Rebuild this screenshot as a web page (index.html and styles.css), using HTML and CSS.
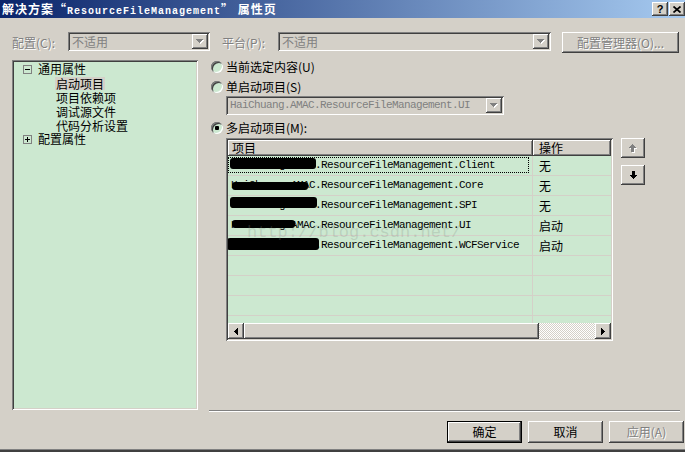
FILE: index.html
```html
<!DOCTYPE html>
<html lang="zh-CN">
<head>
  <meta charset="UTF-8" />
  <title>解决方案属性页</title>
  <link rel="stylesheet" href="styles.css">
</head>
<body>
  <div class="window">
    <div class="titlebar">
      <span class="title">解决方案“<span class="title-mono">ResourceFileManagement</span>” 属性页</span>
      <div class="caption">
        <span class="cap-btn raised help">?</span>
        <span class="cap-btn raised">
          <svg width="8" height="7" viewBox="0 0 8 7"><path d="M0.5 0.5l7 6M7.5 0.5l-7 6" stroke="#000" stroke-width="1.7"/></svg>
        </span>
      </div>
    </div>

    <div class="toolbar">
      <span class="label disabled">配置(C):</span>
      <div class="combo sunken combo-config">
        <span class="value">不适用</span>
        <span class="drop raised">
          <svg width="8" height="5" viewBox="0 0 8 5" shape-rendering="crispEdges"><path d="M1 1h7v1h-1v1h-1v1h-1v1h-1v-1h-1v-1h-1v-1h-1z" fill="#fff"/><path d="M0 0h7v1h-1v1h-1v1h-1v1h-1v-1h-1v-1h-1v-1h-1z" fill="#808080"/></svg>
        </span>
      </div>
      <span class="label disabled label-platform">平台(P):</span>
      <div class="combo sunken combo-platform">
        <span class="value">不适用</span>
        <span class="drop raised">
          <svg width="8" height="5" viewBox="0 0 8 5" shape-rendering="crispEdges"><path d="M1 1h7v1h-1v1h-1v1h-1v1h-1v-1h-1v-1h-1v-1h-1z" fill="#fff"/><path d="M0 0h7v1h-1v1h-1v1h-1v1h-1v-1h-1v-1h-1v-1h-1z" fill="#808080"/></svg>
        </span>
      </div>
      <div class="btn raised btn-manager disabled">配置管理器(O)...</div>
    </div>

    <div class="main">
      <div class="tree sunken">
        <div class="node"><span class="expander minus"></span>通用属性</div>
        <div class="node child"><span class="sel">启动项目</span></div>
        <div class="node child"><span class="item">项目依赖项</span></div>
        <div class="node child"><span class="item">调试源文件</span></div>
        <div class="node child"><span class="item">代码分析设置</span></div>
        <div class="node"><span class="expander plus"></span>配置属性</div>
      </div>

      <div class="panel">
        <div class="radio-row"><span class="radio"></span>当前选定内容(U)</div>
        <div class="radio-row second"><span class="radio"></span>单启动项目(S)</div>
        <div class="combo sunken combo-single">
          <span class="value mono">HaiChuang.AMAC.ResourceFileManagement.UI</span>
          <span class="drop raised">
            <svg width="8" height="5" viewBox="0 0 8 5" shape-rendering="crispEdges"><path d="M1 1h7v1h-1v1h-1v1h-1v1h-1v-1h-1v-1h-1v-1h-1z" fill="#fff"/><path d="M0 0h7v1h-1v1h-1v1h-1v1h-1v-1h-1v-1h-1v-1h-1z" fill="#808080"/></svg>
          </span>
        </div>
        <div class="radio-row third"><span class="radio checked"></span>多启动项目(M):</div>

        <div class="multi">
          <div class="list sunken">
            <div class="list-head">
              <div class="head-cell raised head-name">项目</div>
              <div class="head-cell raised head-action">操作</div>
            </div>
            <div class="list-body">
              <div class="row">
                <div class="cell-name mono focus">HaiChuang.AMAC.ResourceFileManagement.Client<span class="blot blot-1"></span></div>
                <div class="cell-action">无</div>
              </div>
              <div class="row">
                <div class="cell-name mono">HaiChuang.AMAC.ResourceFileManagement.Core<span class="blot blot-2"></span></div>
                <div class="cell-action">无</div>
              </div>
              <div class="row">
                <div class="cell-name mono">HaiChuang.AMAC.ResourceFileManagement.SPI<span class="blot blot-3"></span></div>
                <div class="cell-action">无</div>
              </div>
              <div class="row">
                <div class="cell-name mono">HaiChuang.AMAC.ResourceFileManagement.UI<span class="blot blot-4"></span></div>
                <div class="cell-action">启动</div>
              </div>
              <div class="row">
                <div class="cell-name mono">HaiChuang.AMAC.ResourceFileManagement.WCFService<span class="blot blot-5"></span></div>
                <div class="cell-action">启动</div>
              </div>
              <div class="row"><div class="cell-name"></div><div class="cell-action"></div></div>
              <div class="row"><div class="cell-name"></div><div class="cell-action"></div></div>
              <div class="row"><div class="cell-name"></div><div class="cell-action"></div></div>
              <div class="row"><div class="cell-name"></div><div class="cell-action"></div></div>
              <div class="watermark">http://blog.csdn.net/</div>
            </div>
            <div class="hscroll">
              <span class="sb-btn raised">
                <svg width="4" height="7" viewBox="0 0 4 7" shape-rendering="crispEdges"><path d="M3 0h1v7h-1v-1h-1v-1h-1v-1h-1v-1h1v-1h1v-1h1z"/></svg>
              </span>
              <span class="sb-thumb raised"></span>
              <span class="sb-track"></span>
              <span class="sb-btn raised">
                <svg width="4" height="7" viewBox="0 0 4 7" shape-rendering="crispEdges"><path d="M0 0h1v1h1v1h1v1h1v1h-1v1h-1v1h-1v1h-1z"/></svg>
              </span>
            </div>
          </div>
          <div class="order-btns">
            <span class="order-btn raised">
              <svg width="8" height="9" viewBox="0 0 8 9" shape-rendering="crispEdges"><path d="M4 1h1v1h1v1h1v1h1v1h-2v4h-3v-4h-2v-1h1v-1h1v-1h1z" fill="#fff"/><path d="M3 0h1v1h1v1h1v1h1v1h-2v4h-3v-4h-2v-1h1v-1h1v-1h1z" fill="#808080"/></svg>
            </span>
            <span class="order-btn raised">
              <svg width="7" height="8" viewBox="0 0 7 8" shape-rendering="crispEdges"><path d="M2 0h3v4h2v1h-1v1h-1v1h-1v1h-1v-1h-1v-1h-1v-1h-1v-1h2z"/></svg>
            </span>
          </div>
        </div>

        <div class="separator"></div>
      </div>
    </div>

    <div class="footer">
      <div class="btn raised btn-default">确定</div>
      <div class="btn raised">取消</div>
      <div class="btn raised disabled">应用(A)</div>
    </div>
  </div>
</body>
</html>
```

FILE: styles.css
```css
body {
  margin: 0;
  width: 685px;
  height: 452px;
  overflow: hidden;
  background: #d4d0c8;
  font-family: "Noto Sans CJK SC", "Noto Sans", sans-serif;
  font-size: 12px;
  color: #000;
}
.window {
  height: 452px;
  box-sizing: border-box;
  border-bottom: 2px solid #404040;
  box-shadow: inset 0 -1px #808080;
  display: flex;
  flex-direction: column;
}
.raised {
  background: #d4d0c8;
  box-shadow: inset -1px -1px #404040, inset 1px 1px #fff, inset -2px -2px #808080;
}
.sunken {
  box-shadow: inset 1px 1px #808080, inset -1px -1px #fff, inset 2px 2px #404040, inset -2px -2px #d4d0c8;
}
.disabled {
  color: #808080;
  text-shadow: 1px 1px 0 #fff;
}
.mono {
  font-family: "Liberation Mono", monospace;
  font-size: 11px;
  letter-spacing: -0.6px;
}

/* title bar */
.titlebar {
  height: 18px;
  flex-shrink: 0;
  background: linear-gradient(to right, #0a246a, #a6caf0);
  display: flex;
  justify-content: space-between;
  color: #fff;
  font-weight: bold;
}
.title {
  padding-left: 2px;
  line-height: 18px;
  letter-spacing: 1px;
  white-space: nowrap;
}
.title-mono {
  font-family: "Liberation Mono", monospace;
  font-size: 10px;
  letter-spacing: 1px;
}
.caption {
  display: flex;
  gap: 1px;
  margin-top: 2px;
}
.cap-btn {
  width: 16px;
  height: 14px;
  display: flex;
  align-items: center;
  justify-content: center;
  color: #000;
}
.help {
  font-family: "Liberation Sans", sans-serif;
  font-size: 11px;
  font-weight: bold;
  line-height: 14px;
}

/* top row */
.toolbar {
  display: flex;
  align-items: flex-start;
  padding: 14px 0 0 12px;
  height: 21px;
  flex-shrink: 0;
}
.label {
  width: 56px;
  line-height: 22px;
  white-space: nowrap;
}
.label-platform {
  margin-left: 12px;
}
.combo {
  height: 19px;
  box-sizing: border-box;
  padding: 2px;
  display: flex;
  background: #d4d0c8;
}
.combo .value {
  flex: 1;
  color: #808080;
  line-height: 15px;
  padding-left: 2px;
  overflow: hidden;
  white-space: nowrap;
}
.drop {
  width: 16px;
  height: 15px;
  display: flex;
  align-items: center;
  justify-content: center;
}
.combo-config { width: 142px; }
.combo-platform { width: 273px; }
.btn {
  width: 75px;
  height: 22px;
  box-sizing: border-box;
  line-height: 22px;
  text-align: center;
  white-space: nowrap;
}
.btn-manager {
  margin-left: 11px;
  width: 117px;
  height: 21px;
  line-height: 21px;
}

/* main area */
.main {
  display: flex;
  margin-top: 7px;
  height: 350px;
  padding-left: 12px;
  flex-shrink: 0;
}
.tree {
  width: 186px;
  height: 350px;
  box-sizing: border-box;
  padding: 2px;
  background: #cce8d0;
}
.node {
  display: flex;
  align-items: center;
  height: 14px;
  line-height: 14px;
  padding-left: 9px;
  white-space: nowrap;
}
.node.child {
  padding-left: 41px;
}
.expander {
  width: 9px;
  height: 9px;
  box-sizing: border-box;
  border: 1px solid #808080;
  margin-right: 6px;
}
.minus {
  background: linear-gradient(#000, #000) center / 5px 1px no-repeat;
}
.plus {
  background:
    linear-gradient(#000, #000) center / 5px 1px no-repeat,
    linear-gradient(#000, #000) center / 1px 5px no-repeat;
}
.sel, .item {
  padding: 0 1px;
  line-height: 13px;
}
.sel {
  background: #d4d0c8;
}

.panel {
  margin-left: 12px;
  width: 470px;
  display: flex;
  flex-direction: column;
}
.radio-row {
  display: flex;
  align-items: center;
  gap: 3px;
  height: 14px;
  line-height: 14px;
  padding-left: 1px;
  white-space: nowrap;
}
.radio-row.second,
.radio-row.third {
  margin-top: 6px;
}
.radio {
  width: 12px;
  height: 12px;
  border-radius: 50%;
  background: #cce8d0;
  box-shadow: inset 1px 1px #808080, inset -1px -1px #fff, inset 2px 2px #404040;
}
.radio.checked {
  background: radial-gradient(circle, #000 0 2px, #cce8d0 2.5px);
}
.combo-single {
  width: 278px;
  margin: 2px 0 0 16px;
}
.combo-single .value {
  line-height: 15px;
}

.multi {
  display: flex;
  margin-top: 3px;
  padding-left: 16px;
}
.list {
  width: 387px;
  height: 203px;
  box-sizing: border-box;
  padding: 2px;
  background: #cce8d0;
  display: flex;
  flex-direction: column;
}
.list-head {
  display: flex;
  height: 16px;
  flex-shrink: 0;
}
.head-cell {
  box-sizing: border-box;
  line-height: 16px;
  padding-left: 4px;
}
.head-name { width: 305px; }
.head-action { flex: 1; padding-left: 6px; }
.list-body {
  position: relative;
  flex: 1;
  overflow: hidden;
}
.row {
  display: flex;
  height: 20px;
  box-sizing: border-box;
  border-bottom: 1px solid #d4d0c8;
  line-height: 19px;
}
.cell-name {
  position: relative;
  width: 305px;
  box-sizing: border-box;
  border-right: 1px solid #d4d0c8;
  padding-left: 3px;
  white-space: nowrap;
}
.cell-action {
  padding-left: 6px;
}
.focus::after {
  content: "";
  position: absolute;
  left: 0;
  top: 1px;
  right: 3px;
  bottom: 2px;
  border: 1px dotted #000;
}
.blot {
  position: absolute;
  background: #000;
  border-radius: 3px;
}
.blot-1 { left: 2px; top: 2px; width: 86px; height: 11px; }
.blot-2 { left: 4px; top: 6px; width: 76px; height: 8px; }
.blot-3 { left: 2px; top: 1px; width: 87px; height: 11px; }
.blot-4 { left: 4px; top: 4px; width: 63px; height: 8px; }
.blot-5 { left: -1px; top: 2px; width: 92px; height: 12px; }
.watermark {
  position: absolute;
  left: 19px;
  top: 67px;
  font-family: "Liberation Mono", monospace;
  font-size: 17px;
  color: rgba(130, 140, 130, 0.25);
  white-space: nowrap;
  pointer-events: none;
}
.hscroll {
  display: flex;
  height: 16px;
  flex-shrink: 0;
}
.sb-btn {
  width: 16px;
  height: 16px;
  display: flex;
  align-items: center;
  justify-content: center;
}
.sb-thumb {
  width: 295px;
}
.sb-track {
  flex: 1;
  background: repeating-conic-gradient(#fff 0 25%, #d4d0c8 0 50%) 0 0 / 2px 2px;
}
.order-btns {
  margin-left: 8px;
  display: flex;
  flex-direction: column;
  gap: 7px;
}
.order-btn {
  width: 24px;
  height: 20px;
  display: flex;
  align-items: center;
  justify-content: center;
}
.separator {
  margin: auto 0 -2px -1px;
  width: 471px;
  height: 2px;
  box-sizing: border-box;
  border-top: 1px solid #808080;
  border-bottom: 1px solid #fff;
}

/* bottom buttons */
.footer {
  display: flex;
  justify-content: flex-end;
  gap: 6px;
  margin-top: 11px;
  padding-right: 1px;
}
.btn-default {
  border: 1px solid #000;
  line-height: 20px;
}
```
